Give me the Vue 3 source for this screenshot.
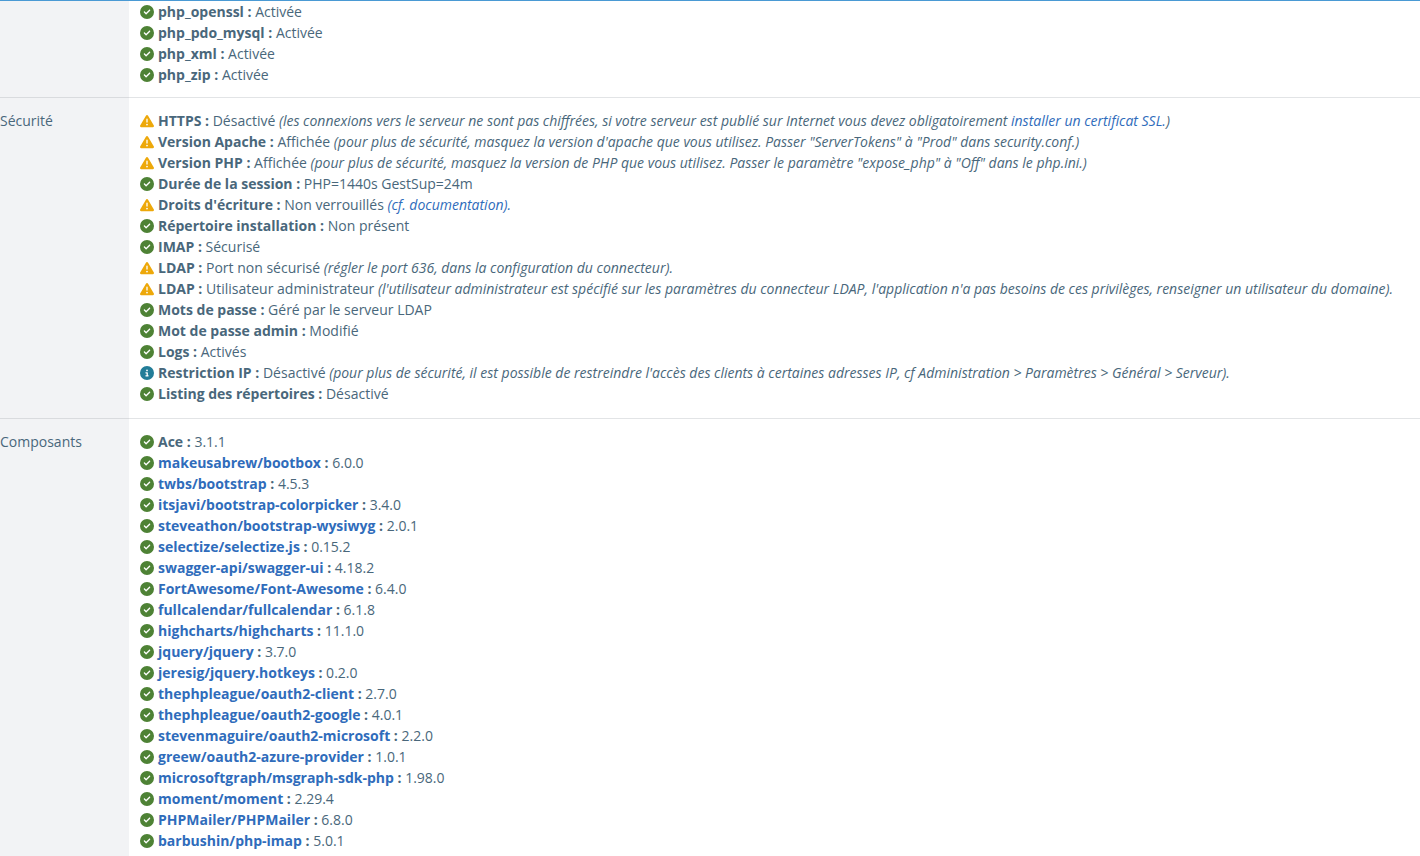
<template>
  <main class="page">
    <table class="system">
      <tbody>
        <tr v-for="section in sections" :key="section.id">
          <th scope="row">{{ section.label }}</th>
          <td>
            <ul class="checks">
              <li v-for="(item, i) in section.items" :key="i">
                <svg :class="['icon', item.state]" viewBox="0 0 512 512" aria-hidden="true">
                  <path :d="icons[item.state]" />
                </svg>
                <strong><a v-if="item.repo" :href="'https://github.com/' + item.name">{{ item.name }}</a><template v-else>{{ item.name }}</template> :</strong>
                {{ item.value }}
                <em v-if="item.note || item.link">{{ item.note }}<a v-if="item.link" href="#">{{ item.link }}</a>{{ item.end }}</em>
              </li>
            </ul>
          </td>
        </tr>
      </tbody>
    </table>
  </main>
</template>

<script setup>
const icons = {
  ok: 'M256 512A256 256 0 1 0 256 0a256 256 0 1 0 0 512zM369 209L241 337c-9.4 9.4-24.6 9.4-33.9 0l-64-64c-9.4-9.4-9.4-24.6 0-33.9s24.6-9.4 33.9 0l47 47L335 175c9.4-9.4 24.6-9.4 33.9 0s9.4 24.6 0 33.9z',
  warning: 'M256 32c14.2 0 27.3 7.5 34.5 19.8l216 368c7.3 12.4 7.3 27.7 .2 40.1S486.3 480 472 480H40c-14.3 0-27.6-7.7-34.7-20.1s-7-27.8 .2-40.1l216-368C228.7 39.5 241.8 32 256 32zm0 128c-13.3 0-24 10.7-24 24V296c0 13.3 10.7 24 24 24s24-10.7 24-24V184c0-13.3-10.7-24-24-24zm32 224a32 32 0 1 0 -64 0 32 32 0 1 0 64 0z',
  info: 'M256 512A256 256 0 1 0 256 0a256 256 0 1 0 0 512zM216 336h24V272H216c-13.3 0-24-10.7-24-24s10.7-24 24-24h48c13.3 0 24 10.7 24 24v88h8c13.3 0 24 10.7 24 24s-10.7 24-24 24H216c-13.3 0-24-10.7-24-24s10.7-24 24-24zm40-208a32 32 0 1 1 0 64 32 32 0 1 1 0-64z'
}

const extension = (name) => ({ state: 'ok', name, value: 'Activée' })
const component = (name, value) => ({ state: 'ok', name, value, repo: true })

const sections = [
  {
    id: 'extensions',
    label: '',
    items: [
      extension('php_openssl'),
      extension('php_pdo_mysql'),
      extension('php_xml'),
      extension('php_zip')
    ]
  },
  {
    id: 'security',
    label: 'Sécurité',
    items: [
      {
        state: 'warning',
        name: 'HTTPS',
        value: 'Désactivé',
        note: '(les connexions vers le serveur ne sont pas chiffrées, si votre serveur est publié sur Internet vous devez obligatoirement ',
        link: 'installer un certificat SSL.',
        end: ')'
      },
      {
        state: 'warning',
        name: 'Version Apache',
        value: 'Affichée',
        note: '(pour plus de sécurité, masquez la version d\'apache que vous utilisez. Passer "ServerTokens" à "Prod" dans security.conf.)'
      },
      {
        state: 'warning',
        name: 'Version PHP',
        value: 'Affichée',
        note: '(pour plus de sécurité, masquez la version de PHP que vous utilisez. Passer le paramètre "expose_php" à "Off" dans le php.ini.)'
      },
      { state: 'ok', name: 'Durée de la session', value: 'PHP=1440s GestSup=24m' },
      {
        state: 'warning',
        name: "Droits d'écriture",
        value: 'Non verrouillés',
        link: '(cf. documentation).'
      },
      { state: 'ok', name: 'Répertoire installation', value: 'Non présent' },
      { state: 'ok', name: 'IMAP', value: 'Sécurisé' },
      {
        state: 'warning',
        name: 'LDAP',
        value: 'Port non sécurisé',
        note: '(régler le port 636, dans la configuration du connecteur).'
      },
      {
        state: 'warning',
        name: 'LDAP',
        value: 'Utilisateur administrateur',
        note: "(l'utilisateur administrateur est spécifié sur les paramètres du connecteur LDAP, l'application n'a pas besoins de ces privilèges, renseigner un utilisateur du domaine)."
      },
      { state: 'ok', name: 'Mots de passe', value: 'Géré par le serveur LDAP' },
      { state: 'ok', name: 'Mot de passe admin', value: 'Modifié' },
      { state: 'ok', name: 'Logs', value: 'Activés' },
      {
        state: 'info',
        name: 'Restriction IP',
        value: 'Désactivé',
        note: "(pour plus de sécurité, il est possible de restreindre l'accès des clients à certaines adresses IP, cf Administration > Paramètres > Général > Serveur)."
      },
      { state: 'ok', name: 'Listing des répertoires', value: 'Désactivé' }
    ]
  },
  {
    id: 'components',
    label: 'Composants',
    items: [
      { state: 'ok', name: 'Ace', value: '3.1.1' },
      component('makeusabrew/bootbox', '6.0.0'),
      component('twbs/bootstrap', '4.5.3'),
      component('itsjavi/bootstrap-colorpicker', '3.4.0'),
      component('steveathon/bootstrap-wysiwyg', '2.0.1'),
      component('selectize/selectize.js', '0.15.2'),
      component('swagger-api/swagger-ui', '4.18.2'),
      component('FortAwesome/Font-Awesome', '6.4.0'),
      component('fullcalendar/fullcalendar', '6.1.8'),
      component('highcharts/highcharts', '11.1.0'),
      component('jquery/jquery', '3.7.0'),
      component('jeresig/jquery.hotkeys', '0.2.0'),
      component('thephpleague/oauth2-client', '2.7.0'),
      component('thephpleague/oauth2-google', '4.0.1'),
      component('stevenmaguire/oauth2-microsoft', '2.2.0'),
      component('greew/oauth2-azure-provider', '1.0.1'),
      component('microsoftgraph/msgraph-sdk-php', '1.98.0'),
      component('moment/moment', '2.29.4'),
      component('PHPMailer/PHPMailer', '6.8.0'),
      component('barbushin/php-imap', '5.0.1')
    ]
  }
]
</script>

<style>
body {
  margin: 0;
  background: #fff;
}
</style>

<style scoped>
.page {
  box-sizing: border-box;
  min-height: 100vh;
  display: grid;
  border-top: 1px solid #4a9ad4;
  font-family: 'Open Sans', sans-serif;
  font-size: 14px;
  line-height: 21px;
  color: #49677b;
}

.system {
  width: 100%;
  border-collapse: separate;
  border-spacing: 0;
}

th,
td {
  padding: 12px 11px 14px;
  border-bottom: 1px solid #e2e4e6;
  text-align: left;
  vertical-align: top;
}

th {
  box-sizing: border-box;
  width: 129px;
  padding-left: 0;
  border-bottom-color: #d9dbde;
  background: #f2f3f5;
  font-weight: 400;
}

tr:first-child > * {
  padding-top: 0;
  padding-bottom: 12px;
}

tr:last-child {
  height: 100%;
}

tr:last-child > * {
  padding-bottom: 0;
  border-bottom: 0;
}

.checks {
  margin: 0;
  padding: 0;
  list-style: none;
}

.icon {
  width: 14px;
  height: 14px;
  margin-right: 4px;
  vertical-align: -2px;
  fill: currentColor;
}

.ok {
  color: #4e8235;
}

.warning {
  color: #eda80a;
}

.info {
  color: #237d98;
}

strong {
  font-weight: 700;
}

em {
  font-style: italic;
}

a {
  color: #2f6cbb;
  text-decoration: none;
}

a:hover {
  text-decoration: underline;
}
</style>
